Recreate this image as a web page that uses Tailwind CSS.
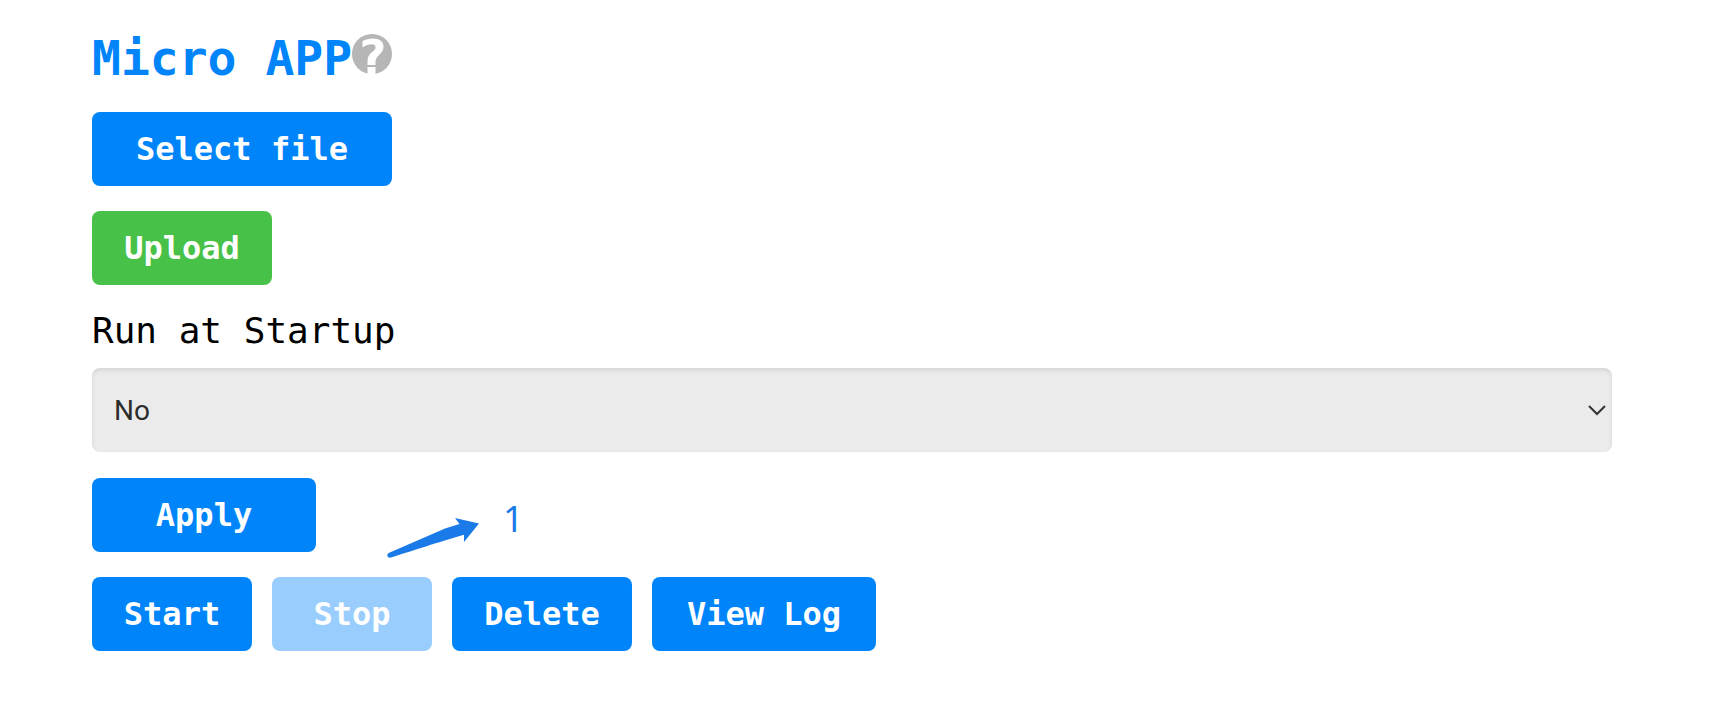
<!DOCTYPE html>
<html lang="en">
<head>
    <meta charset="UTF-8">
    <meta name="viewport" content="width=device-width, initial-scale=1.0">
    <title>Micro APP</title>
    <script src="https://cdn.jsdelivr.net/npm/@tailwindcss/browser@4"></script>
</head>
<body class="bg-white text-black font-['DejaVu_Sans_Mono',monospace]">
    <main class="flex flex-col items-start gap-[25px] pt-[31px] pb-[63px] pl-[92px] pr-[98px]">
        <div class="flex min-h-14 items-start">
            <h1 class="text-[48px] leading-[54px] font-bold text-[#0084fa]">Micro APP</h1>
            <button type="button" aria-label="Help" class="mt-[3px]">
                <svg class="size-10" viewBox="0 0 40 40">
                    <circle cx="20" cy="20" r="20" fill="#b6b6b6"/>
                    <path d="M10.500 7C13.500 5.500 17 4.500 21 4.500C27.500 4.500 31.500 7.500 31.500 12.500C31.500 16.500 29.500 19 26.500 21.500C24.500 23.500 23.500 25 23.500 28V31H15.500V28C15.500 23.500 16.500 21 19.500 18.500C22 16.500 23.500 15.300 23.500 13.200C23.500 11.200 22 10.300 20 10.300C17 10.300 13.500 11.500 10.500 13.500Z" fill="#fff"/>
                    <path d="M15.500 33H23.500V40H15.500Z" fill="#fff"/>
                </svg>
            </button>
        </div>

        <button type="button" class="h-[74px] w-[300px] rounded-lg bg-[#0084fa] text-[32px] font-bold text-white">Select file</button>
        <button type="button" class="h-[74px] w-[180px] rounded-lg bg-[#48c148] text-[32px] font-bold text-white">Upload</button>

        <div class="flex w-full flex-col gap-4">
            <label for="startup" class="text-[36px] leading-[42px]">Run at Startup</label>
            <div class="grid items-center">
                <select id="startup" class="col-start-1 row-start-1 h-[84px] w-full appearance-none rounded-lg bg-[#ebebeb] px-[22px] pt-0.5 font-[Roboto,sans-serif] text-[28px] text-[#2c2c2c] shadow-[inset_0_2px_4px_rgba(0,0,0,0.1)]">
                    <option>No</option>
                    <option>Yes</option>
                </select>
                <svg class="pointer-events-none col-start-1 row-start-1 mr-1.5 h-3 w-[18px] justify-self-end" viewBox="0 0 18 12" fill="none" stroke="#333" stroke-width="2">
                    <path d="M1 2L9 10L17 2"/>
                </svg>
            </div>
        </div>

        <div class="flex h-[75px] items-start pt-px">
            <button type="button" class="h-[74px] w-[224px] rounded-lg bg-[#0084fa] text-[32px] font-bold text-white">Apply</button>
            <svg class="ml-[71px] mt-10 h-10 w-[92px]" viewBox="0 0 92 40" fill="#1a7ae8">
                <path d="M0.300 37.500C0.300 36 1.200 35.200 2.800 34.500L58 10.500L72.500 6L68 0L92 5.500L77 24V16.800C60 21.500 30 31.500 4 39.500C2 40 0.300 39 0.300 37.500Z"/>
            </svg>
            <span class="ml-6 mt-5 font-['Noto_Sans',sans-serif] text-[36px] leading-[42px] text-[#1a7ae8]">1</span>
        </div>

        <div class="flex flex-wrap gap-5">
            <button type="button" class="h-[74px] w-[160px] rounded-lg bg-[#0084fa] text-[32px] font-bold text-white">Start</button>
            <button type="button" disabled class="h-[74px] w-[160px] rounded-lg bg-[#99cdfd] text-[32px] font-bold text-white">Stop</button>
            <button type="button" class="h-[74px] w-[180px] rounded-lg bg-[#0084fa] text-[32px] font-bold text-white">Delete</button>
            <button type="button" class="h-[74px] w-[224px] rounded-lg bg-[#0084fa] text-[32px] font-bold text-white">View Log</button>
        </div>
    </main>
</body>
</html>
